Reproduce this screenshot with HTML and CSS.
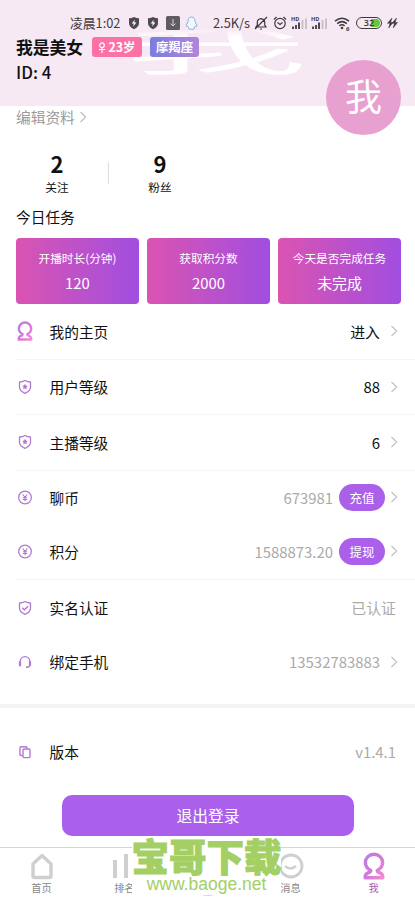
FILE: index.html
```html
<!DOCTYPE html>
<html lang="zh-CN">
<head>
<meta charset="utf-8">
<title>我</title>
<link rel="stylesheet" href="styles.css">
</head>
<body>
<svg class="defs" width="0" height="0">
  <defs>
    <linearGradient id="pinkPurple" x1="0" y1="0" x2="1" y2="1"><stop offset="0" stop-color="#b880e4"/><stop offset=".5" stop-color="#d477dc"/><stop offset="1" stop-color="#f58ad2"/></linearGradient>
    <symbol id="chevron" viewBox="0 0 8 14"><path d="M1.5 2 6.7 7 1.5 12" fill="none" stroke="currentColor" stroke-width="1.1"/></symbol>
    <symbol id="person" viewBox="0 0 20 26"><path d="M7 17.2C3.600 15.500 2 12.800 2 9.800A8 7.800 0 0 1 18 9.800C18 12.800 16.400 15.500 13 17.200Q13.200 18.800 16 19.600Q18.200 20.500 18.200 24H1.800Q1.800 20.500 4 19.600Q6.800 18.800 7 17.200Z" fill="none" stroke="url(#pinkPurple)" stroke-width="3.200" stroke-linejoin="round"/></symbol>
    <symbol id="shield" viewBox="0 0 14 16"><path d="M7 1.500Q9.500 3 12.500 3V8Q12.500 12 7 14.300Q1.500 12 1.500 8V3Q4.500 3 7 1.500Z" fill="none" stroke="currentColor" stroke-width="1.300" stroke-linejoin="round"/></symbol>
    <symbol id="star" viewBox="0 0 14 16"><use href="#shield"/><path d="m7 4.800.9 1.800 2 .3-1.500 1.400.4 2L7 9.400l-1.800.9.4-2-1.500-1.400 2-.3Z" fill="currentColor"/></symbol>
    <symbol id="verified" viewBox="0 0 14 16"><use href="#shield"/><path d="m4.200 7.800 2.200 2 3.700-3.600" fill="none" stroke="currentColor" stroke-width="1.400"/></symbol>
    <symbol id="coin" viewBox="0 0 14 14"><circle cx="7" cy="7" r="5.900" fill="none" stroke="currentColor" stroke-width="1.200"/><path d="m4.900 4.200 2.100 2.700 2.100-2.700M7 6.900v3.600M5 7.200h4M5 8.900h4" fill="none" stroke="currentColor" stroke-width="1"/></symbol>
    <symbol id="headset" viewBox="0 0 14 14"><path d="M2.300 10.500V6.300a4.700 4.700 0 0 1 9.400 0v3.900Q11.700 12.300 8 12.300" fill="none" stroke="currentColor" stroke-width="1.400"/><path d="M2 6.300v5M12 6.300v4.400" stroke="currentColor" stroke-width="2.200"/></symbol>
    <symbol id="copy" viewBox="0 0 14 14"><path d="M4.500 10.500H3q-1 0-1-1V2.700q0-1 1-1h5q1 0 1 1v1.100" fill="none" stroke="currentColor" stroke-width="1.400"/><rect x="5" y="4" width="7" height="8.600" rx="1" fill="none" stroke="currentColor" stroke-width="1.400"/></symbol>
    <symbol id="guard" viewBox="0 0 12 14"><path d="M6 1Q8.500 2.300 11 2.300V7Q11 11 6 13.200Q1 11 1 7V2.300Q3.500 2.300 6 1Z" fill="#4f4a50"/><path d="M6.700 3.800 3.700 7.600h2L5.200 10.400l3.200-4H6.300Z" fill="#fff"/></symbol>
    <symbol id="signal" viewBox="0 0 17 14"><text x="0" y="5" class="hd">HD</text><path d="M2 13V10.500M5 13V9M8 13V6.500" stroke="#3e393f" stroke-width="1.800"/><path d="M11.500 13V4M15 13V2.500" stroke="#c6bdc5" stroke-width="1.800"/></symbol>
  </defs>
</svg>
<div class="screen">
  <header class="hero">
    <div class="cover-glyph">我</div>
    <div class="status">
      <span class="time">凌晨1:02</span>
      <svg class="s-guard" width="12" height="14"><use href="#guard"/></svg>
      <svg class="s-guard2" width="12" height="14"><use href="#guard"/></svg>
      <svg class="s-down" width="14" height="14" viewBox="0 0 14 14"><rect width="14" height="14" rx="1.500" fill="#605a61"/><path d="M7 3v7M4.500 7.600 7 10l2.500-2.400" fill="none" stroke="#d8d0d7"/></svg>
      <svg class="s-qq" width="13" height="14" viewBox="0 0 13 14"><path d="M6.500 1C3.800 1 3 3 3 5.500L1 9.500q0 1.500 1.600.5Q3 11.300 4 12q-1 1 1 1.200h3q2-.2 1-1.200 1-.7 1.400-2Q12 11 12 9.500L10 5.500C10 3 9.200 1 6.500 1Z" fill="#f3f6ff" stroke="#86b3e0"/></svg>
      <span class="speed">2.5K/s</span>
      <svg class="s-bell" width="14" height="14" viewBox="0 0 14 14"><path d="M2 11h10L10.700 9V6Q10.500 3 7 2.600 3.500 3 3.300 6v3ZM6 13h2M1 13 13 1" fill="none" stroke="#3e393f" stroke-width="1.200"/></svg>
      <svg class="s-alarm" width="14" height="14" viewBox="0 0 14 14"><circle cx="7" cy="7.500" r="5.200" fill="none" stroke="#3e393f" stroke-width="1.200"/><path d="m4.500 6.500 2.500 2 2.500-2M1 3.500 3.500 1M10.500 1 13 3.500" fill="none" stroke="#3e393f" stroke-width="1.200"/></svg>
      <svg class="s-sig" width="17" height="14"><use href="#signal"/></svg>
      <svg class="s-sig2" width="17" height="14"><use href="#signal"/></svg>
      <svg class="s-wifi" width="17" height="15" viewBox="0 0 17 15"><path d="M1 5.200Q8 -.6 15 5.200M3.200 7.600Q8 3.600 12.800 7.600M5.400 9.900Q8 7.800 10.600 9.900" fill="none" stroke="#3e393f" stroke-width="1.500"/><circle cx="8" cy="12" r="1.300" fill="#3e393f"/><text x="12" y="14.500" class="six">6</text></svg>
      <span class="battery">32</span>
      <svg class="s-bolt" width="12" height="12" viewBox="0 0 12 12"><path d="M6 1 1.500 6.300H4L2.700 11 7 5.500H4.600ZM10.500 1 6 6.300h2.500L7.200 11 11.500 5.500H9.100Z" fill="#3e393f" stroke="#3e393f" stroke-width=".5"/></svg>
    </div>
    <div class="identity">
      <div class="name-line"><h1 class="name">我是美女</h1><span class="tag tag-age"><svg width="8" height="11" viewBox="0 0 8 11"><circle cx="4" cy="3.200" r="2.300" fill="none" stroke="#fff" stroke-width="1.200"/><path d="M4 5.500V11M1 7.500h6" stroke="#fff" stroke-width="1.200"/></svg>23岁</span><span class="tag tag-sign">摩羯座</span></div>
      <div class="uid">ID: 4</div>
    </div>
    <div class="avatar">我</div>
  </header>
  <main>
    <a class="edit">编辑资料<svg width="8" height="14"><use href="#chevron"/></svg></a>
    <section class="stats">
      <div class="stat"><b>2</b><span>关注</span></div>
      <i class="rule"></i>
      <div class="stat"><b>9</b><span>粉丝</span></div>
    </section>
    <h2 class="heading">今日任务</h2>
    <section class="cards">
      <div class="card"><span>开播时长(分钟)</span><b>120</b></div>
      <div class="card"><span>获取积分数</span><b>2000</b></div>
      <div class="card"><span>今天是否完成任务</span><b>未完成</b></div>
    </section>
    <section class="list">
      <div class="row line"><svg class="icon" width="16" height="20"><use href="#person"/></svg><span class="label">我的主页</span><span class="value">进入</span><svg class="arrow" width="8" height="14"><use href="#chevron"/></svg></div>
      <div class="row line"><svg class="icon" width="14" height="16"><use href="#star"/></svg><span class="label">用户等级</span><span class="value">88</span><svg class="arrow" width="8" height="14"><use href="#chevron"/></svg></div>
      <div class="row line"><svg class="icon" width="14" height="16"><use href="#star"/></svg><span class="label">主播等级</span><span class="value">6</span><svg class="arrow" width="8" height="14"><use href="#chevron"/></svg></div>
      <div class="row nudge"><svg class="icon" width="14" height="15"><use href="#coin"/></svg><span class="label">聊币</span><span class="value muted with-pill">673981</span><span class="pill">充值</span><svg class="arrow" width="8" height="14"><use href="#chevron"/></svg></div>
      <div class="row line short nudge"><svg class="icon" width="14" height="15"><use href="#coin"/></svg><span class="label">积分</span><span class="value muted with-pill">1588873.20</span><span class="pill">提现</span><svg class="arrow" width="8" height="14"><use href="#chevron"/></svg></div>
      <div class="row"><svg class="icon" width="14" height="16"><use href="#verified"/></svg><span class="label">实名认证</span><span class="value muted last">已认证</span></div>
      <div class="row phone"><svg class="icon" width="14" height="14"><use href="#headset"/></svg><span class="label">绑定手机</span><span class="value muted">13532783883</span><svg class="arrow" width="8" height="14"><use href="#chevron"/></svg></div>
    </section>
    <div class="band"></div>
    <section class="list about">
      <div class="row"><svg class="icon" width="14" height="14"><use href="#copy"/></svg><span class="label">版本</span><span class="value muted last">v1.4.1</span></div>
    </section>
    <button class="logout">退出登录</button>
  </main>
  <nav class="tabs">
    <a class="tab"><svg width="26" height="28" viewBox="0 0 26 28"><path d="M4 12 13 3.500 22 12V24q0 1.500-1.500 1.500h-15Q4 25.500 4 24Z" fill="none" stroke="#cfcfcf" stroke-width="3.400" stroke-linejoin="round"/></svg><span>首页</span></a>
    <a class="tab"><svg width="26" height="28" viewBox="0 0 26 28"><path d="M3 8v18M14 2v24M24 12v14" fill="none" stroke="#cfcfcf" stroke-width="4"/></svg><span>排名</span></a>
    <a class="tab"><i class="live"></i></a>
    <a class="tab"><svg width="26" height="28" viewBox="0 0 26 28"><circle cx="13" cy="14" r="11" fill="none" stroke="#cfcfcf" stroke-width="2.800"/><path d="M7 14q5 5 11 0" fill="none" stroke="#cfcfcf" stroke-width="2.400"/></svg><span>消息</span></a>
    <a class="tab active"><svg width="22" height="28"><use href="#person"/></svg><span>我</span></a>
  </nav>
  <div class="watermark"><b>宝哥下载</b><span>www.baoge.net</span></div>
</div>
</body>
</html>
```

FILE: styles.css
```css
* { box-sizing: border-box; }
body { margin: 0; background: #fff; color: #111; font-family: "Noto Sans CJK SC", sans-serif; }
h1, h2 { margin: 0; font-weight: inherit; }
b, i { font-style: normal; font-weight: inherit; }
svg { display: block; flex: none; }
.defs { position: absolute; }
.screen { position: relative; width: 415px; height: 900px; overflow: hidden; display: flex; flex-direction: column; }

.hero { position: relative; flex: none; height: 106px; padding-top: 14px; background: #f7e9f3; }
.cover-glyph { position: absolute; left: 124px; top: 23px; padding-bottom: 10px; font-size: 50px; line-height: 50px; color: transparent; background: linear-gradient(rgba(255, 255, 255, 0) 5px, #fff 15px); -webkit-background-clip: text; background-clip: text; transform: scaleX(3.68); transform-origin: 0 0; }
.status { position: relative; display: flex; align-items: center; height: 18px; padding-left: 70px; font-size: 12.8px; line-height: 18px; color: #3e393f; white-space: nowrap; }
.time { width: 58px; }
.speed { width: 41px; margin-left: 15px; }
.s-guard2 { margin-left: 7px; }
.s-down { margin-left: 7px; }
.s-qq { margin-left: 5px; }
.s-alarm { margin-left: 5px; }
.s-sig { margin-left: 4px; }
.s-sig2 { margin-left: 3px; }
.s-wifi { margin-left: 6px; }
.s-bolt { margin-left: 4px; }
.hd { font: 700 5.5px "Open Sans", sans-serif; fill: #3e393f; }
.six { font: 700 6px "Open Sans", sans-serif; fill: #3e393f; }
.battery { width: 26px; height: 12px; margin-left: 5px; border: 1px solid #3e393f; border-radius: 6px; background: linear-gradient(90deg, #f7e9f3 0 14px, #63c83c 14px); background-clip: content-box; padding: 1px; font: 600 9px/8px "Open Sans", sans-serif; text-align: center; }
.identity { position: relative; padding-left: 16px; }
.name-line { display: flex; align-items: center; height: 30px; }
.name { width: 76px; font-size: 16.8px; line-height: 30px; font-weight: 700; white-space: nowrap; }
.uid { height: 22px; margin-top: -1px; font-size: 16.8px; line-height: 22px; font-weight: 500; }
.tag { display: flex; align-items: center; justify-content: center; height: 20px; border-radius: 3px; color: #fff; font-size: 12.4px; font-weight: 700; line-height: 20px; }
.tag-age { width: 50px; gap: 2px; background: #fd71a4; }
.tag-sign { width: 49px; margin-left: 8px; background: linear-gradient(90deg, #7b7edc, #b184da); }
.avatar { position: absolute; left: 326px; top: 60px; width: 75px; height: 75px; border-radius: 50%; background: #e7a0d0; color: #fff; font-size: 37px; line-height: 71px; text-align: center; }

main { flex: 1; display: flex; flex-direction: column; }
.edit { display: flex; align-items: center; gap: 4px; height: 22px; padding-left: 16px; font-size: 14.7px; line-height: 20px; color: #9b9b9b; }
.edit svg { color: #bbb; }
.stats { display: flex; align-items: center; height: 76px; padding-top: 14px; }
.stat { width: 82px; display: flex; flex-direction: column; align-items: center; }
.stat:first-child { margin-left: 16px; }
.stat b { font-size: 22px; line-height: 26px; font-weight: 700; }
.stat span { font-size: 11.7px; line-height: 20px; padding-top: 1px; }
.rule { width: 1px; height: 22px; margin: 0 10px; background: #ddd; }
.heading { height: 34px; padding-left: 16px; font-size: 14.7px; line-height: 26px; }
.cards { display: grid; grid-template-columns: repeat(3, 1fr); gap: 8px; padding: 0 14px 0 16px; }
.card { display: flex; flex-direction: column; align-items: center; height: 66px; padding-top: 9px; border-radius: 4px; background: linear-gradient(90deg, #da54b1, #a14ee0); color: #fff; white-space: nowrap; }
.card span { font-size: 11.7px; line-height: 22px; }
.card b { font-size: 14.9px; line-height: 27px; }
.list { padding: 0 0 0 16px; }
.row { display: flex; align-items: center; height: 55px; padding-right: 14px; font-size: 14.7px; }
.line { height: 55.5px; border-bottom: 1px solid #f5f5f5; }
.short { height: 54.5px; }
.nudge, .phone { padding-bottom: 2px; }
.icon { width: 18px; color: #b17ad0; }
.label { margin-left: 15.5px; }
.value { margin-left: auto; margin-right: 10px; font-size: 14.9px; }
.value.with-pill { margin-right: 6px; }
.value.last { margin-right: 5px; }
.muted { color: #aaa; }
.pill { width: 46px; height: 27px; margin-right: 5px; border-radius: 14px; background: #aa60e9; color: #fff; font-size: 12.5px; line-height: 27px; text-align: center; }
.arrow { margin-right: 3px; color: #c0c0c0; }
.band { height: 4px; margin-top: 14px; background: #f4f4f4; }
.about { padding-top: 16px; }
.logout { width: 292px; height: 41px; margin: 16px 0 0 62px; padding: 0; border: 0; border-radius: 10px; background: #aa60eb; color: #fff; font: 15.8px/41px "Noto Sans CJK SC", sans-serif; }
.tabs { flex: none; display: grid; grid-template-columns: repeat(5, 1fr); height: 53px; border-top: 1px solid #d5d5d5; }
.tab { display: flex; flex-direction: column; align-items: center; padding-top: 4px; color: #888; font-size: 10.2px; line-height: 14px; }
.tab svg { margin-bottom: 1px; }
.active { color: #a65bb5; }
.live { width: 40px; height: 40px; border-radius: 20px; margin-top: 4px; background: #e3cdf3; }
.watermark { position: absolute; left: 132px; top: 836px; width: 149px; height: 59px; display: flex; flex-direction: column; align-items: center; background: #fff; color: #a3cf65; white-space: nowrap; }
.watermark b { font-size: 37.5px; line-height: 38px; font-weight: 900; -webkit-text-stroke: 1px #a3cf65; }
.watermark span { font: 17.5px/21px "Liberation Sans", sans-serif; }
```
